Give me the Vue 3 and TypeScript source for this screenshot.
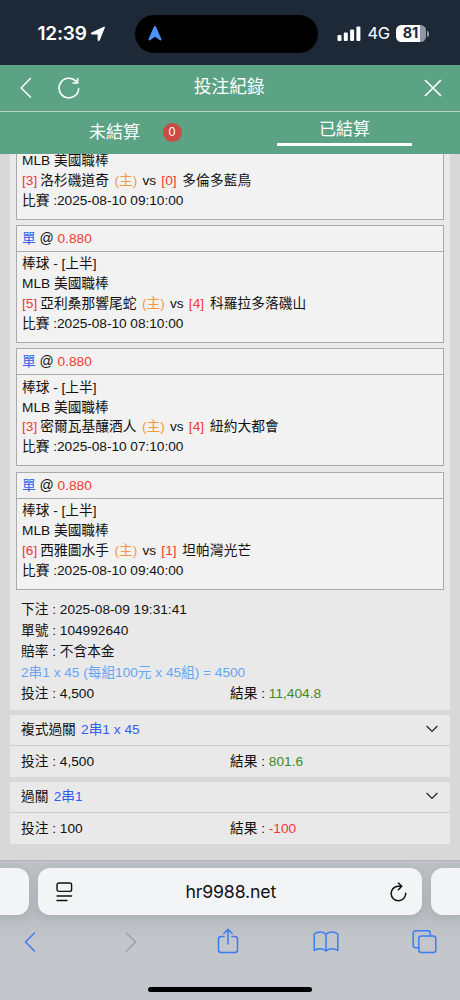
<script setup lang="ts">
interface Game {
  scoreA: number
  home: string
  scoreB: number
  away: string
  time: string
  scrolled?: boolean
}

interface Ticket {
  kind: string
  combo: string
  stake: string
  result: string
  won: boolean
}

// The first game is scrolled partly under the tabs, so its heading is left out.
const games: Game[] = [
  { scoreA: 3, home: '洛杉磯道奇', scoreB: 0, away: '多倫多藍鳥', time: '2025-08-10 09:10:00', scrolled: true },
  { scoreA: 5, home: '亞利桑那響尾蛇', scoreB: 4, away: '科羅拉多落磯山', time: '2025-08-10 08:10:00' },
  { scoreA: 3, home: '密爾瓦基釀酒人', scoreB: 4, away: '紐約大都會', time: '2025-08-10 07:10:00' },
  { scoreA: 6, home: '西雅圖水手', scoreB: 1, away: '坦帕灣光芒', time: '2025-08-10 09:40:00' },
]

const tickets: Ticket[] = [
  { kind: '複式過關', combo: '2串1 x 45', stake: '4,500', result: '801.6', won: true },
  { kind: '過關', combo: '2串1', stake: '100', result: '-100', won: false },
]
</script>

<template>
  <div class="screen">
    <div class="status">
      <div class="clock">
        <span>12:39</span>
        <svg width="16" height="16" viewBox="0 0 16 16"><path d="M14.500 1.200 9.300 14.200c-.3.800-1.200 .7-1.200-.1V8H2C1 8 .9 7.300 1.700 6.900L14 1.200c.4-.2.600-.2.500 0Z" fill="#fff" stroke="#fff" stroke-width="1" stroke-linejoin="round" /></svg>
      </div>
      <div class="island">
        <svg width="14" height="15" viewBox="0 0 14 15"><path d="M5.700 1C6.200-.2 7.600-.2 8.100 1L13.500 13.200C13.800 14.200 12.800 14.700 12 14.200L7.800 11.300Q7 10.800 6.200 11.300L2 14.200C1.100 14.700.2 14.200.5 13.200Z" fill="#4b93f8" /></svg>
      </div>
      <div class="signal">
        <svg width="24" height="15" viewBox="0 0 24 15" fill="#fff"><rect x="0.500" y="9" width="4" height="6" rx="1.100" /><rect x="6.800" y="6.500" width="4" height="8.500" rx="1.100" /><rect x="13.100" y="3.500" width="4" height="11.500" rx="1.100" /><rect x="19.400" y="0.500" width="4" height="14.500" rx="1.100" /></svg>
        <span class="net">4G</span>
        <span class="battery"><b>81</b></span>
        <i class="cap"></i>
      </div>
    </div>

    <header class="bar">
      <div class="nav">
        <svg width="12" height="22" viewBox="0 0 12 22" fill="none" stroke="#fff" stroke-width="1.500"><path d="M10.800 1 1.200 11 10.800 20.500" /></svg>
        <svg width="24" height="24" viewBox="0 0 24 24" fill="none" stroke="#fff" stroke-width="1.600"><path d="M21.700 12.200A9.800 9.800 0 1 1 19 5.300L20.600 7M20.600 2V7H15.500" /></svg>
      </div>
      <h1>投注紀錄</h1>
      <svg class="close" width="18" height="18" viewBox="0 0 18 18" stroke="#fff" stroke-width="1.700"><path d="M1 1 17 17M17 1 1 17" /></svg>
    </header>
    <nav class="tabs">
      <div class="tab pending"><span>未結算</span><em>0</em></div>
      <div class="tab active"><span>已結算</span></div>
    </nav>

    <main class="list">
      <section class="sheet parlay">
        <article v-for="g in games" :key="g.home" class="card" :class="{ scrolled: g.scrolled }">
          <div v-if="!g.scrolled" class="odds"><span class="blue">單</span> <span class="at">@</span> <span class="red">0.880</span></div>
          <div class="info">
            <p v-if="!g.scrolled">棒球 - [上半]</p>
            <p>MLB 美國職棒</p>
            <p><span class="red">[{{ g.scoreA }}]</span><span class="team">{{ g.home }}</span><span class="orange">(主)</span><span class="vs">vs</span><span class="red">[{{ g.scoreB }}]</span><span class="team away">{{ g.away }}</span></p>
            <p>比賽 :<span class="time">{{ g.time }}</span></p>
          </div>
        </article>
        <div class="summary">
          <p>下注 : 2025-08-09 19:31:41</p>
          <p>單號 : 104992640</p>
          <p>賠率 : 不含本金</p>
          <p class="sky">2串1 x 45 (每組100元 x 45組) = 4500</p>
          <div class="split"><span>投注 : 4,500</span><span>結果 : <span class="green">11,404.8</span></span></div>
        </div>
      </section>
      <section v-for="t in tickets" :key="t.kind" class="sheet">
        <div class="head">
          <span>{{ t.kind }} <span class="blue combo">{{ t.combo }}</span></span>
          <svg width="12" height="8" viewBox="0 0 12 8" fill="none" stroke="#222" stroke-width="1.200"><path d="M.6 1 6 6.400 11.400 1" /></svg>
        </div>
        <div class="split foot"><span>投注 : {{ t.stake }}</span><span>結果 : <span :class="t.won ? 'green' : 'red'">{{ t.result }}</span></span></div>
      </section>
    </main>

    <footer class="safari">
      <div class="pages">
        <div class="peek left"></div>
        <div class="address">
          <svg width="17" height="20" viewBox="0 0 17 20" fill="none" stroke="#111" stroke-width="1.400" stroke-linecap="round"><rect x="1" y="1" width="14.600" height="8.400" rx="2" /><path d="M1 14H15.600M1 18.500H11" /></svg>
          <span>hr9988.net</span>
          <svg width="18" height="20" viewBox="0 0 18 20" fill="none" stroke="#111" stroke-width="1.500" stroke-linecap="round" stroke-linejoin="round"><path d="M16.700 11.200A7.300 7.300 0 1 1 9.400 4.200H12.500M9.400 1 12.700 4.300 9.400 7.700" /></svg>
        </div>
        <div class="peek right"></div>
      </div>
      <div class="tools">
        <svg width="12" height="28" viewBox="0 0 12 28"><path d="M10.500 5 1.500 14 10.500 23" /></svg>
        <svg class="dim" width="12" height="28" viewBox="0 0 12 28"><path d="M1.500 5 10.500 14 1.500 23" /></svg>
        <svg width="22" height="28" viewBox="0 0 22 28"><path d="M7 8.500H4A2.500 2.500 0 0 0 1.500 11V22A2.500 2.500 0 0 0 4 24.500H18A2.500 2.500 0 0 0 20.500 22V11A2.500 2.500 0 0 0 18 8.500H15M11 16V1.500M6.800 5.500 11 1.300 15.200 5.500" /></svg>
        <svg width="26" height="28" viewBox="0 0 26 28"><path d="M13 6.500C10.500 3.300 4.500 3.300 1.200 6V22.500C4.500 20.200 10 20.200 13 23C16 20.200 21.500 20.200 24.800 22.500V6C21.500 3.300 15.500 3.300 13 6.500ZV22.500" /></svg>
        <svg width="25" height="28" viewBox="0 0 25 28"><path d="M7 19.800H3.700A2.500 2.500 0 0 1 1.200 17.300V5.200A2.500 2.500 0 0 1 3.700 2.700H15.800A2.500 2.500 0 0 1 18.300 5.200V8.100" /><rect x="6.800" y="8.100" width="17" height="16.500" rx="2.500" /></svg>
      </div>
      <div class="home"></div>
    </footer>
  </div>
</template>

<style>
body { margin: 0; overflow: hidden; }
</style>

<style scoped>
* { box-sizing: border-box; }
p, h1 { margin: 0; font-weight: 400; }
svg { display: block; flex: none; }
.screen {
  width: 460px; height: 1000px; overflow: hidden;
  display: flex; flex-direction: column;
  background: #d8d8d8; color: #111;
  font: 13.700px/19.800px "Liberation Sans", "Noto Sans CJK TC", sans-serif;
}
.status {
  height: 65px; flex: none; background: #1e2938; color: #fff;
  display: grid; grid-template-columns: 135px 183px 1fr; padding-top: 14.500px;
  font-family: Inter, sans-serif;
}
.clock { display: flex; align-items: center; height: 39px; padding-left: 37.500px; font-size: 19px; font-weight: 600; letter-spacing: -.2px; }
.clock svg { margin-left: 3.500px; }
.island { height: 38.500px; border-radius: 20px; background: #000; padding: 11px 0 0 12.500px; }
.signal { display: flex; align-items: center; height: 39px; padding-left: 19px; }
.signal svg { margin-top: -1px; }
.net { font-size: 16.500px; font-weight: 400; margin-left: 6.500px; width: 21px; letter-spacing: -.3px; }
.battery {
  margin-left: 7px; width: 30px; height: 16.500px; border-radius: 5.500px; text-align: center;
  background: linear-gradient(90deg, #fff 81%, #9097a1 81%);
  color: #1e2938; font-size: 14.500px; line-height: 16.500px; margin-top: -1px;
}
.battery b { font-weight: 700; }
.cap { width: 2px; height: 6px; margin: -1px 0 0 1px; border-radius: 0 2px 2px 0; background: #9097a1; }

.bar {
  height: 47px; flex: none; background: #5ca385; color: #fff; border-bottom: 1px solid #b5d3c6;
  display: grid; grid-template-columns: 1fr auto 1fr; align-items: center; padding: 0 18.500px 1px 20px;
}
.nav { display: flex; align-items: center; gap: 24.500px; }
h1 { font-size: 17.700px; line-height: 45px; margin: 0 1px 0 -1px; transform: translateX(-.5px); }
.close { justify-self: end; }
.tabs { height: 41.500px; flex: none; background: #5ca385; color: #fff; display: grid; grid-template-columns: 1fr 1fr; font-size: 17px; }
.tab { display: flex; }
.pending { padding-left: 89px; align-items: center; }
.pending em {
  margin-left: 22.500px; width: 19px; height: 19px; border-radius: 50%; background: #c74d43;
  font-size: 12.500px; line-height: 19px; font-style: normal; text-align: center;
}
.active { width: 135px; height: 33.500px; margin-left: 47.400px; border-bottom: 3px solid #fff; justify-content: center; line-height: 35px; }
.active span { margin-right: 1px; }

.list { height: 706px; flex: none; overflow: hidden; padding: 0 10px 16px; display: flex; flex-direction: column; justify-content: flex-end; gap: 5.500px; }
.sheet { flex: none; background: #e9e9e9; }
.parlay { padding: 0 6px; }
.card { height: 118px; margin-bottom: 5.400px; border: 1px solid #aaa; background: #f2f2f2; }
.card.scrolled { height: 68.500px; border-top: 0; }
.card.scrolled .info { padding-top: 0; }
.odds { height: 26px; border-bottom: 1px solid #aaa; padding-left: 5px; line-height: 25px; }
.at { font-size: 14px; }
.info { padding: 2.500px 0 0 5px; }
.info p { height: 19.800px; white-space: nowrap; }
.time { letter-spacing: -.04px; }
.team { margin-left: 3px; letter-spacing: .08px; }
.orange { margin-left: 5.400px; color: #f19a43; }
.vs { margin: 0 5.200px; }
.away { margin-left: 5.800px; }
.summary { padding: 5.300px 5px 4.700px; line-height: 20.800px; }
.summary p { height: 20.900px; }
.split { display: grid; grid-template-columns: 209px 1fr; }
.sky { color: #6aa5f3; letter-spacing: -.02px; }
.blue { color: #315ff0; }
.red { color: #f23a2f; }
.green { color: #3d8a27; }
.head { height: 30.500px; border-bottom: 1px solid #ccc; padding: 0 12.500px 0 11px; display: flex; align-items: center; justify-content: space-between; }
.head svg { margin-top: -1.500px; }
.combo { margin-left: 1.500px; }
.foot { height: 31px; padding-left: 11px; line-height: 31px; }

.safari { flex: 1; border-top: 1px solid #b2b6bb; padding-top: 7.500px; background: linear-gradient(#bdc1c5 0, #b7bbc0 50px, #c3c6cb 82px); }
.pages { display: grid; grid-template-columns: 29px 384px 29px; gap: 9px; height: 47px; }
.address, .peek { background: #f3f4f6; box-shadow: 0 2px 8px rgba(60, 65, 70, .12); }
.peek.left { border-radius: 0 12px 12px 0; }
.peek.right { border-radius: 12px 0 0 12px; }
.address { border-radius: 12px; display: flex; align-items: center; justify-content: space-between; padding: 0 15px 0 17.500px; font: 400 17.700px/47px Inter, sans-serif; letter-spacing: -.15px; }
.tools { display: grid; grid-template-columns: 60px 141px 54px 142px 54px; justify-items: center; padding: 13px 0 0; }
.tools svg { fill: none; stroke: #3b7df5; stroke-width: 1.500; stroke-linecap: round; stroke-linejoin: round; }
.tools .dim { stroke: #9da1a6; }
.home { width: 164px; height: 5px; margin: 30.500px auto 0; border-radius: 3px; background: #000; }
</style>
